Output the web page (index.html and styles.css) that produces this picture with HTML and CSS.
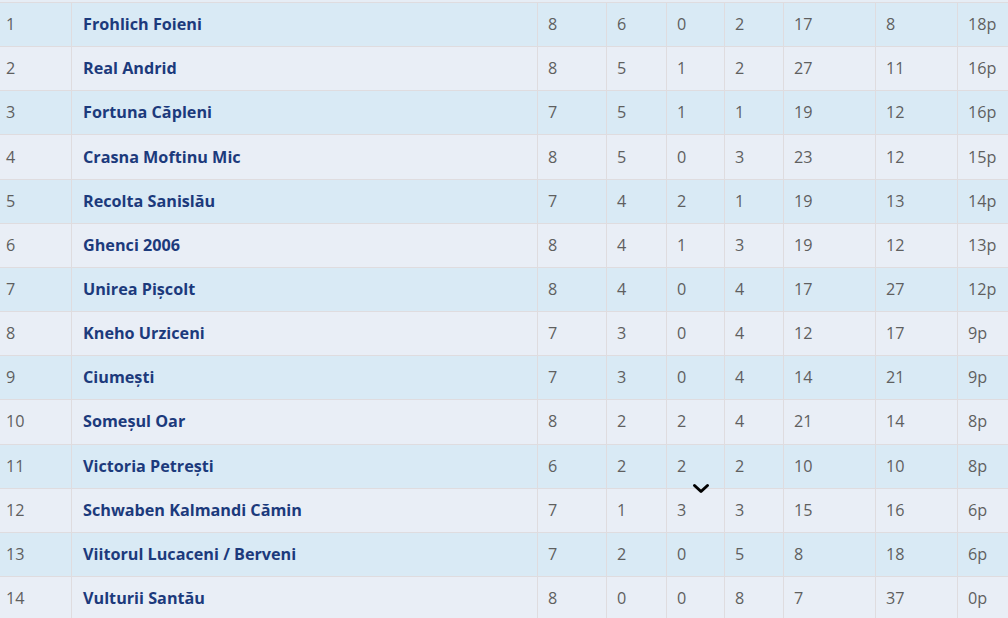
FILE: index.html
```html
<!DOCTYPE html>
<html lang="ro">
<head>
<meta charset="utf-8">
<title>Clasament</title>
<link rel="stylesheet" href="styles.css">
</head>
<body>
<div class="standings">
  <div class="top-strip"></div>
  <div class="table">
    <div class="row odd"><div class="c rank">1</div><div class="c team">Frohlich Foieni</div><div class="c">8</div><div class="c">6</div><div class="c">0</div><div class="c">2</div><div class="c">17</div><div class="c">8</div><div class="c">18p</div></div>
    <div class="row even"><div class="c rank">2</div><div class="c team">Real Andrid</div><div class="c">8</div><div class="c">5</div><div class="c">1</div><div class="c">2</div><div class="c">27</div><div class="c">11</div><div class="c">16p</div></div>
    <div class="row odd"><div class="c rank">3</div><div class="c team">Fortuna Căpleni</div><div class="c">7</div><div class="c">5</div><div class="c">1</div><div class="c">1</div><div class="c">19</div><div class="c">12</div><div class="c">16p</div></div>
    <div class="row even"><div class="c rank">4</div><div class="c team">Crasna Moftinu Mic</div><div class="c">8</div><div class="c">5</div><div class="c">0</div><div class="c">3</div><div class="c">23</div><div class="c">12</div><div class="c">15p</div></div>
    <div class="row odd"><div class="c rank">5</div><div class="c team">Recolta Sanislău</div><div class="c">7</div><div class="c">4</div><div class="c">2</div><div class="c">1</div><div class="c">19</div><div class="c">13</div><div class="c">14p</div></div>
    <div class="row even"><div class="c rank">6</div><div class="c team">Ghenci 2006</div><div class="c">8</div><div class="c">4</div><div class="c">1</div><div class="c">3</div><div class="c">19</div><div class="c">12</div><div class="c">13p</div></div>
    <div class="row odd"><div class="c rank">7</div><div class="c team">Unirea Pișcolt</div><div class="c">8</div><div class="c">4</div><div class="c">0</div><div class="c">4</div><div class="c">17</div><div class="c">27</div><div class="c">12p</div></div>
    <div class="row even"><div class="c rank">8</div><div class="c team">Kneho Urziceni</div><div class="c">7</div><div class="c">3</div><div class="c">0</div><div class="c">4</div><div class="c">12</div><div class="c">17</div><div class="c">9p</div></div>
    <div class="row odd"><div class="c rank">9</div><div class="c team">Ciumești</div><div class="c">7</div><div class="c">3</div><div class="c">0</div><div class="c">4</div><div class="c">14</div><div class="c">21</div><div class="c">9p</div></div>
    <div class="row even"><div class="c rank">10</div><div class="c team">Someșul Oar</div><div class="c">8</div><div class="c">2</div><div class="c">2</div><div class="c">4</div><div class="c">21</div><div class="c">14</div><div class="c">8p</div></div>
    <div class="row odd"><div class="c rank">11</div><div class="c team">Victoria Petrești</div><div class="c">6</div><div class="c">2</div><div class="c">2</div><div class="c">2</div><div class="c">10</div><div class="c">10</div><div class="c">8p</div></div>
    <div class="row even"><div class="c rank">12</div><div class="c team">Schwaben Kalmandi Cămin</div><div class="c">7</div><div class="c">1</div><div class="c">3</div><div class="c">3</div><div class="c">15</div><div class="c">16</div><div class="c">6p</div></div>
    <div class="row odd"><div class="c rank">13</div><div class="c team">Viitorul Lucaceni / Berveni</div><div class="c">7</div><div class="c">2</div><div class="c">0</div><div class="c">5</div><div class="c">8</div><div class="c">18</div><div class="c">6p</div></div>
    <div class="row even"><div class="c rank">14</div><div class="c team">Vulturii Santău</div><div class="c">8</div><div class="c">0</div><div class="c">0</div><div class="c">8</div><div class="c">7</div><div class="c">37</div><div class="c">0p</div></div>
  </div>
  <svg class="chevron" width="18" height="11" viewBox="0 0 18 11" aria-hidden="true"><polyline points="2.5,2.5 9,8.5 15.5,2.5" fill="none" stroke="#000" stroke-width="3" stroke-linecap="round" stroke-linejoin="round"/></svg>
</div>
</body>
</html>
```

FILE: styles.css
```css
html, body {
  margin: 0;
  padding: 0;
  background: #e9eef6;
}
body {
  font-family: "Open Sans", "Liberation Sans", sans-serif;
  font-size: 16.2px;
  color: #5f5f5f;
  overflow: hidden;
}
.standings {
  position: relative;
  width: 1008px;
}
.top-strip {
  height: 2px;
  background: #e6edf5;
}
.table {
  border-top: 1px solid #dfdcdf;
}
.row {
  display: grid;
  grid-template-columns: 72px 466px 69px 60px 58px 59px 92px 82px 1fr;
  height: 44.17px;
  box-sizing: border-box;
  border-bottom: 1px solid #dfdcdf;
}
.row.odd { background: #d9eaf5; }
.row.even { background: #e9eef6; }
.c {
  box-sizing: border-box;
  border-right: 1px solid #dfdcdf;
  padding-left: 10px;
  padding-bottom: 1px;
  display: flex;
  align-items: center;
  line-height: 24px;
  white-space: nowrap;
}
.c:last-child { border-right: none; }
.c.rank { padding-left: 6px; }
.c.team {
  padding-left: 11px;
  font-weight: 700;
  color: #1c3a7c;
}
.chevron {
  position: absolute;
  left: 692px;
  top: 483px;
}
```
